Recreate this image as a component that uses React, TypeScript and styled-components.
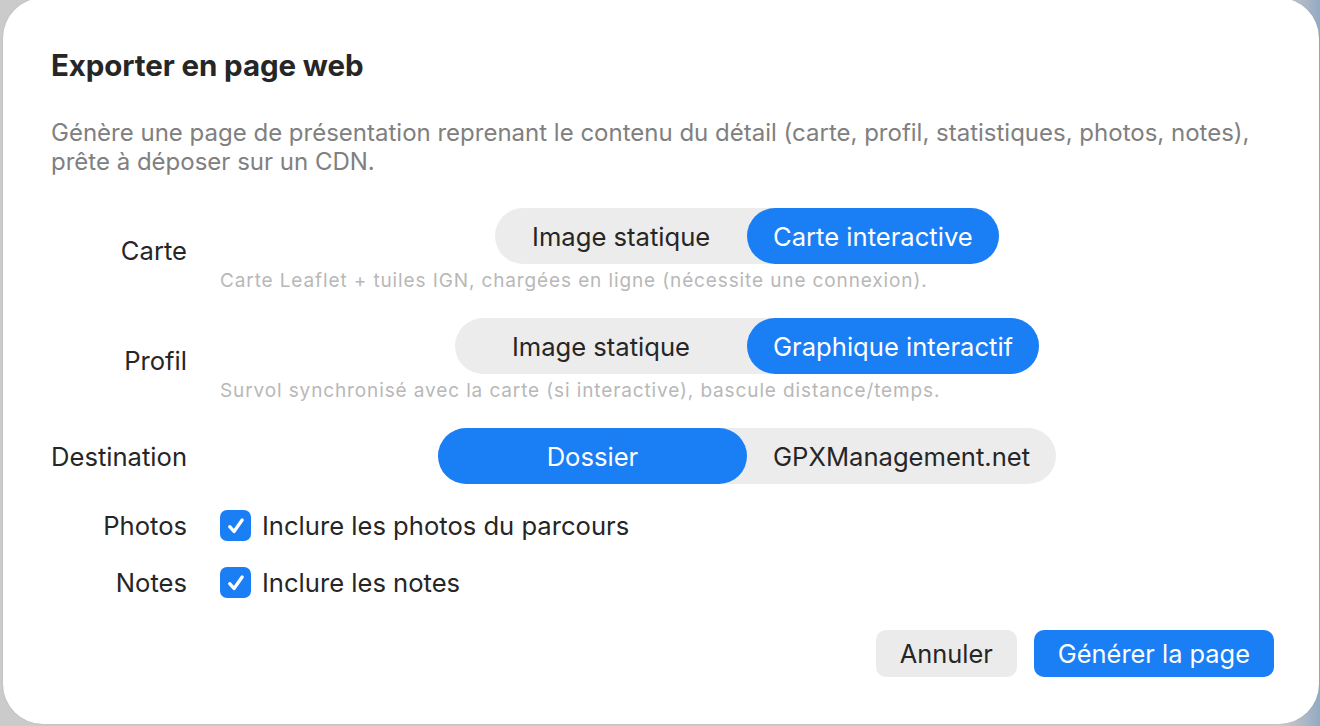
import React, { useState } from "react";
import styled, { createGlobalStyle } from "styled-components";

const GlobalStyle = createGlobalStyle`
  html, body {
    margin: 0;
    padding: 0;
    height: 100%;
    overflow: hidden;
  }
  body {
    background: linear-gradient(90deg, #cbcbcb 0%, #cbcbcb 97%, #a9b6c6 99%, #93a9c4 100%);
    font-family: "Inter", "Liberation Sans", sans-serif;
    -webkit-font-smoothing: antialiased;
  }
`;

const Backdrop = styled.div`
  width: 1320px;
  height: 726px;
  display: flex;
  align-items: flex-start;
`;

const Sheet = styled.div`
  box-sizing: border-box;
  margin: -2px 0 0 3px;
  width: 1316px;
  height: 726px;
  background: #ffffff;
  border-radius: 40px;
  box-shadow: 0 0 2px rgba(0, 0, 0, 0.12);
  padding: 50px 45px 0 48px;
  display: flex;
  flex-direction: column;
`;

const Title = styled.h1`
  margin: 0;
  font-size: 29.5px;
  font-weight: 700;
  color: #262626;
  letter-spacing: -0.1px;
  line-height: 34px;
`;

const Description = styled.p`
  margin: 36px 0 0;
  font-size: 24px;
  line-height: 29px;
  color: #808080;
`;

const Form = styled.div`
  margin-top: 32px;
  display: grid;
  grid-template-columns: 136px 1fr;
  column-gap: 33px;
  row-gap: 26px;
  align-items: center;
`;

const Label = styled.div`
  text-align: right;
  font-size: 25.6px;
  color: #262626;
  white-space: nowrap;
`;

const Field = styled.div<{ $center?: boolean }>`
  display: flex;
  flex-direction: column;
  align-items: ${(p) => (p.$center ? "center" : "flex-start")};
`;

const Segmented = styled.div`
  display: inline-grid;
  grid-template-columns: 1fr 1fr;
  background: #ececec;
  border-radius: 28px;
  height: 56px;
`;

const Segment = styled.button<{ $active: boolean }>`
  border: 0;
  margin: 0;
  padding: 0 26px;
  border-radius: 28px;
  font-family: inherit;
  font-size: 25.6px;
  white-space: nowrap;
  cursor: pointer;
  background: ${(p) => (p.$active ? "#1a7ef5" : "transparent")};
  color: ${(p) => (p.$active ? "#ffffff" : "#262626")};
`;

const Hint = styled.div`
  align-self: flex-start;
  margin-top: 6px;
  font-size: 19px;
  letter-spacing: 0.88px;
  line-height: 22px;
  color: #b8b8b8;
  white-space: nowrap;
`;

const CheckRow = styled.label`
  display: flex;
  align-items: center;
  gap: 11px;
  font-size: 25.6px;
  color: #262626;
  cursor: pointer;
`;

const Box = styled.span<{ $checked: boolean }>`
  width: 31px;
  height: 31px;
  border-radius: 7px;
  display: flex;
  align-items: center;
  justify-content: center;
  background: ${(p) => (p.$checked ? "#1a7ef5" : "#ffffff")};
  border: ${(p) => (p.$checked ? "0" : "1px solid #c4c4c4")};
  box-sizing: border-box;
`;

const Footer = styled.div`
  margin-top: 32px;
  display: flex;
  justify-content: flex-end;
  gap: 17px;
`;

const Button = styled.button<{ $primary?: boolean }>`
  height: 47px;
  border: 0;
  border-radius: 10px;
  padding: 0 24px;
  font-family: inherit;
  font-size: 25.4px;
  cursor: pointer;
  background: ${(p) => (p.$primary ? "#1a7ef5" : "#ebebeb")};
  color: ${(p) => (p.$primary ? "#ffffff" : "#262626")};
`;

type SegProps = {
  options: string[];
  value: number;
  onChange: (i: number) => void;
};

const SegmentedPicker: React.FC<SegProps> = ({ options, value, onChange }) => (
  <Segmented>
    {options.map((o, i) => (
      <Segment key={o} $active={i === value} onClick={() => onChange(i)}>
        {o}
      </Segment>
    ))}
  </Segmented>
);

const Checkbox: React.FC<{ checked: boolean; onToggle: () => void; children: React.ReactNode }> = ({
  checked,
  onToggle,
  children,
}) => (
  <CheckRow onClick={onToggle}>
    <Box $checked={checked}>
      {checked && (
        <svg width="22" height="22" viewBox="0 0 20 20" fill="none">
          <path d="M4.3 10.6 L8.2 15 L15.6 4.6" stroke="#fff" strokeWidth="3" strokeLinecap="round" strokeLinejoin="round" />
        </svg>
      )}
    </Box>
    {children}
  </CheckRow>
);

const App: React.FC = () => {
  const [carte, setCarte] = useState(1);
  const [profil, setProfil] = useState(1);
  const [dest, setDest] = useState(0);
  const [photos, setPhotos] = useState(true);
  const [notes, setNotes] = useState(true);

  return (
    <>
      <GlobalStyle />
      <Backdrop>
        <Sheet>
          <Title>Exporter en page web</Title>
          <Description>
            Génère une page de présentation reprenant le contenu du détail (carte, profil, statistiques, photos, notes),
            <br />
            prête à déposer sur un CDN.
          </Description>
          <Form>
            <Label>Carte</Label>
            <Field $center>
              <SegmentedPicker options={["Image statique", "Carte interactive"]} value={carte} onChange={setCarte} />
              <Hint>Carte Leaflet + tuiles IGN, chargées en ligne (nécessite une connexion).</Hint>
            </Field>

            <Label>Profil</Label>
            <Field $center>
              <SegmentedPicker options={["Image statique", "Graphique interactif"]} value={profil} onChange={setProfil} />
              <Hint>Survol synchronisé avec la carte (si interactive), bascule distance/temps.</Hint>
            </Field>

            <Label>Destination</Label>
            <Field $center>
              <SegmentedPicker options={["Dossier", "GPXManagement.net"]} value={dest} onChange={setDest} />
            </Field>

            <Label>Photos</Label>
            <Field>
              <Checkbox checked={photos} onToggle={() => setPhotos(!photos)}>
                Inclure les photos du parcours
              </Checkbox>
            </Field>

            <Label>Notes</Label>
            <Field>
              <Checkbox checked={notes} onToggle={() => setNotes(!notes)}>
                Inclure les notes
              </Checkbox>
            </Field>
          </Form>
          <Footer>
            <Button>Annuler</Button>
            <Button $primary>Générer la page</Button>
          </Footer>
        </Sheet>
      </Backdrop>
    </>
  );
};

export default App;
